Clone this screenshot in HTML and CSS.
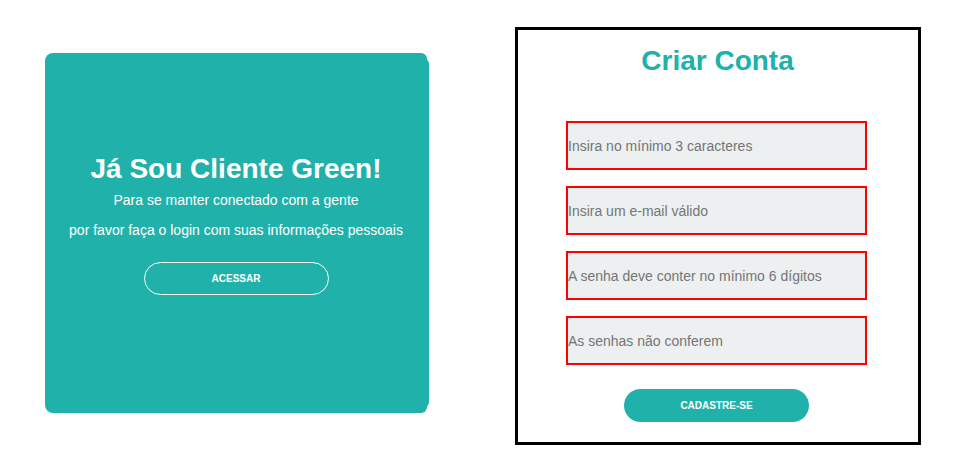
FILE: index.html
```html
<!DOCTYPE html>
<html lang="pt-BR">
<head>
<meta charset="utf-8">
<title>Green - Criar Conta</title>
<link rel="stylesheet" href="styles.css">
</head>
<body>
<div class="page">
  <section class="overlay">
    <h1 class="overlay-title">Já Sou Cliente Green!</h1>
    <p class="overlay-text first">Para se manter conectado com a gente</p>
    <p class="overlay-text second">por favor faça o login com suas informações pessoais</p>
    <button class="btn-ghost" type="button">ACESSAR</button>
  </section>
  <form class="signup">
    <h1 class="signup-title">Criar Conta</h1>
    <div class="fields">
      <input class="field" type="text" placeholder="Insira no mínimo 3 caracteres">
      <input class="field" type="email" placeholder="Insira um e-mail válido">
      <input class="field" type="password" placeholder="A senha deve conter no mínimo 6 dígitos">
      <input class="field" type="password" placeholder="As senhas não conferem">
    </div>
    <button class="btn-solid" type="button">CADASTRE-SE</button>
  </form>
</div>
</body>
</html>
```

FILE: styles.css
```css
* {
  box-sizing: border-box;
}

html, body {
  margin: 0;
  padding: 0;
  background: #ffffff;
  font-family: "Liberation Sans", Arial, sans-serif;
}

.page {
  display: flex;
  align-items: flex-start;
  padding-left: 45px;
  gap: 88px;
}

/* Left teal panel */
.overlay {
  position: relative;
  margin-top: 53px;
  width: 382px;
  height: 360px;
  background: #20b2aa;
  border-radius: 8px 6px 6px 8px;
  color: #ffffff;
  display: flex;
  flex-direction: column;
  align-items: center;
  padding-top: 100px;
  text-align: center;
}

.overlay::after {
  content: "";
  position: absolute;
  top: 5px;
  bottom: 5px;
  right: -2px;
  width: 8px;
  background: #20b2aa;
  border-radius: 0 6px 6px 0;
}

.overlay-title {
  margin: 0;
  font-size: 28px;
  line-height: 32px;
  font-weight: bold;
}

.overlay-text {
  margin: 0;
  font-size: 14px;
  line-height: 16px;
}

.overlay-text.first {
  margin-top: 7px;
}

.overlay-text.second {
  margin-top: 14px;
}

.btn-ghost {
  margin-top: 24px;
  width: 185px;
  height: 33px;
  border: 1px solid #ffffff;
  border-radius: 17px;
  background: transparent;
  color: #ffffff;
  font-family: "Liberation Sans", Arial, sans-serif;
  font-size: 10px;
  font-weight: bold;
  padding: 0;
}

/* Right form */
.signup {
  margin: 27px 0 0 0;
  width: 406px;
  height: 418px;
  border: 3px solid #000000;
  display: flex;
  flex-direction: column;
  align-items: center;
  padding-top: 14px;
}

.signup-title {
  margin: 0;
  font-size: 28px;
  line-height: 33px;
  font-weight: bold;
  color: #20b2aa;
  margin-left: -1px;
}

.fields {
  margin-top: 44px;
  display: flex;
  flex-direction: column;
  gap: 16px;
  margin-right: 3px;
}

.field {
  width: 301px;
  height: 49px;
  border: 2px solid #ff0000;
  background: #ecf0f1;
  padding: 0;
  font-family: "Liberation Sans", Arial, sans-serif;
  font-size: 14px;
  color: #333333;
  outline: none;
}

.field::placeholder {
  color: #757575;
  opacity: 1;
}

.btn-solid {
  margin-top: 24px;
  margin-right: 3px;
  width: 185px;
  height: 33px;
  border: none;
  border-radius: 17px;
  background: #20b2aa;
  color: #ffffff;
  font-family: "Liberation Sans", Arial, sans-serif;
  font-size: 10px;
  font-weight: bold;
  padding: 0;
}
```
